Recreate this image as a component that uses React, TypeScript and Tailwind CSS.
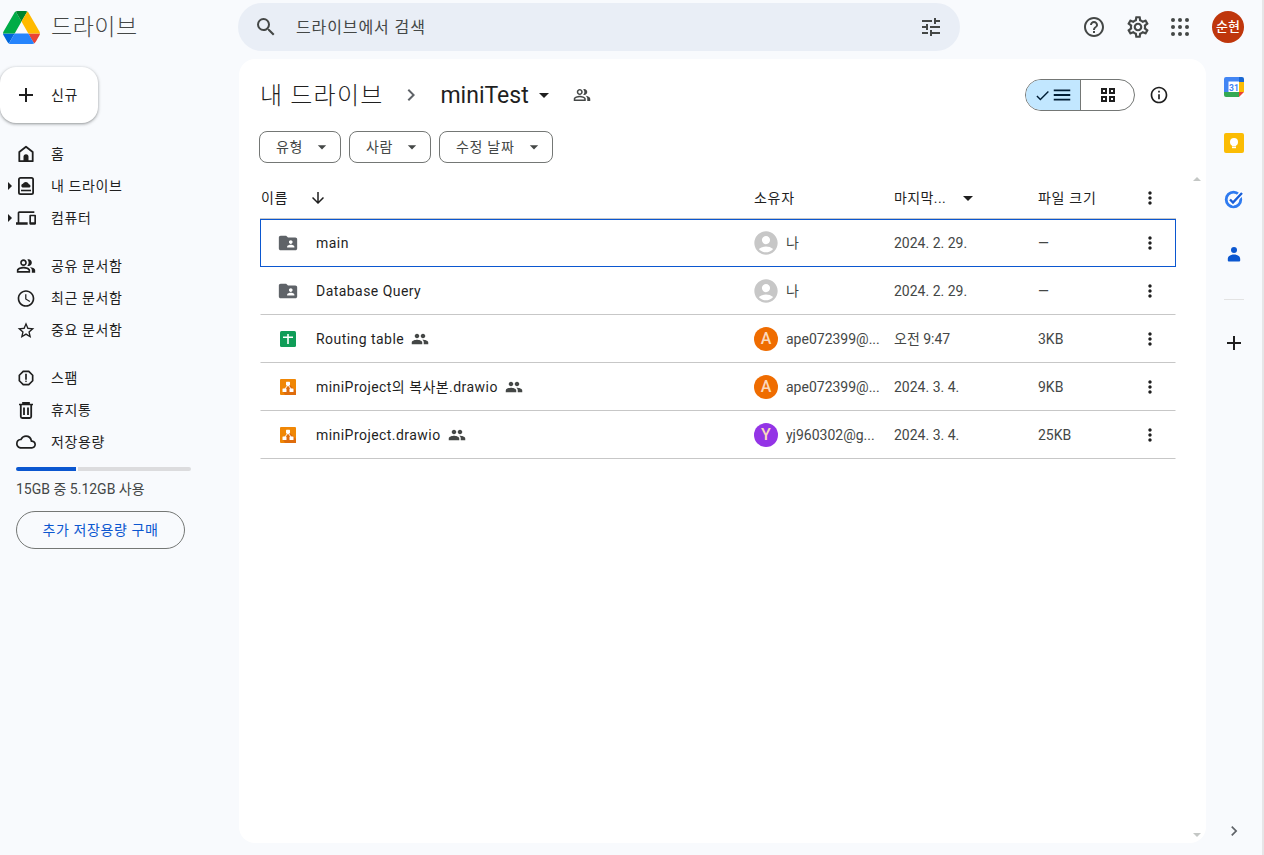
import React from 'react';
import {
  MdAdd,
  MdArrowDownward,
  MdArrowDropDown,
  MdCheck,
  MdChevronRight,
  MdDevices,
  MdFolderShared,
  MdHelpOutline,
  MdMenu,
  MdMoreVert,
  MdOutlineAccessTime,
  MdOutlineCloud,
  MdOutlineInfo,
  MdOutlinePeopleAlt,
  MdOutlineReport,
  MdOutlineSettings,
  MdOutlineStarBorder,
  MdPeople,
  MdSearch,
  MdTune,
  MdAccountCircle,
} from 'react-icons/md';

const FONT = 'font-["Roboto","Noto_Sans_CJK_KR",sans-serif]';

const DriveLogo = () => (
  <svg width="37" height="33" viewBox="0 0 87.3 78">
    <path d="m6.6 66.85 3.85 6.65c.8 1.4 1.95 2.5 3.3 3.3l13.75-23.8h-27.5c0 1.55.4 3.1 1.2 4.5z" fill="#0066da" />
    <path d="m43.65 25-13.75-23.8c-1.35.8-2.5 1.9-3.3 3.3l-25.4 44a9.06 9.06 0 0 0 -1.2 4.5h27.5z" fill="#00ac47" />
    <path d="m73.55 76.8c1.35-.8 2.5-1.9 3.3-3.3l1.6-2.75 7.65-13.25c.8-1.4 1.2-2.95 1.2-4.5h-27.502l5.852 11.5z" fill="#ea4335" />
    <path d="m43.65 25 13.75-23.8c-1.35-.8-2.9-1.2-4.5-1.2h-18.5c-1.6 0-3.15.45-4.5 1.2z" fill="#00832d" />
    <path d="m59.8 53h-32.3l-13.75 23.8c1.35.8 2.9 1.2 4.5 1.2h50.8c1.6 0 3.15-.45 4.5-1.2z" fill="#2684fc" />
    <path d="m73.4 26.5-12.7-22c-.8-1.4-1.95-2.5-3.3-3.3l-13.75 23.8 16.15 28h27.45c0-1.55-.4-3.1-1.2-4.5z" fill="#ffba00" />
  </svg>
);

const AppsIcon = () => (
  <svg width="18" height="18" viewBox="0 0 18 18" fill="#444746">
    {[2, 9, 16].map((y) =>
      [2, 9, 16].map((x) => <circle key={`${x}-${y}`} cx={x} cy={y} r="2" />)
    )}
  </svg>
);

const HomeIcon = () => (
  <svg width="20" height="20" viewBox="0 0 20 20">
    <path d="M10 2.800 3.300 8v9.200h13.400V8z" fill="none" stroke="#1f1f1f" strokeWidth="1.800" strokeLinejoin="round" />
    <path d="M7.500 17v-4.200a2.500 2.500 0 0 1 5 0V17z" fill="#1f1f1f" />
  </svg>
);

const MyDriveIcon = () => (
  <svg width="20" height="20" viewBox="0 0 20 20">
    <rect x="2.900" y="1.900" width="14.200" height="16.200" rx="1.600" fill="none" stroke="#1f1f1f" strokeWidth="1.800" />
    <path d="M6.500 11.600a2 2 0 0 1 .4-3.800 3.200 3.200 0 0 1 6 .4 1.800 1.800 0 0 1 .6 3.400z" fill="#1f1f1f" />
    <path d="M5 14.500h10" stroke="#1f1f1f" strokeWidth="1.600" />
  </svg>
);

const TrashIcon = () => (
  <svg width="20" height="20" viewBox="0 0 20 20" fill="none" stroke="#1f1f1f">
    <path d="M3 4.500h14M7 4.500V2.800h6v1.700" strokeWidth="1.700" />
    <path d="M4.800 4.500v12a1.500 1.500 0 0 0 1.500 1.500h7.400a1.500 1.500 0 0 0 1.500-1.500v-12" strokeWidth="1.800" />
    <path d="M8 7.500v7.500M12 7.500v7.500" strokeWidth="1.800" />
  </svg>
);

const GridIcon = () => (
  <svg width="16" height="16" viewBox="0 0 16 16" fill="none" stroke="#1f1f1f" strokeWidth="2">
    <rect x="2" y="2" width="4" height="4" />
    <rect x="10" y="2" width="4" height="4" />
    <rect x="2" y="10" width="4" height="4" />
    <rect x="10" y="10" width="4" height="4" />
  </svg>
);

const SheetsIcon = () => (
  <svg width="16" height="16" viewBox="0 0 16 16">
    <rect width="16" height="16" rx="1.500" fill="#0f9d58" />
    <path d="M3 5.500h4.200V3h1.600v2.500H13V7H8.800v6H7.200V7H3z" fill="#fff" />
  </svg>
);

const DrawioIcon = () => (
  <svg width="16" height="16" viewBox="0 0 16 16">
    <rect width="16" height="16" rx="1" fill="#f08705" />
    <path d="M16 16H5L3 13l5-6 2-1 6 6z" fill="#df6c0c" />
    <path d="M8 6 4.500 10.500M8 6l3.500 4.500" stroke="#fff" strokeWidth="1" />
    <rect x="6" y="2.800" width="4" height="3.600" rx=".5" fill="#fff" />
    <rect x="2.500" y="9.500" width="4" height="3.600" rx=".5" fill="#fff" />
    <rect x="9.500" y="9.500" width="4" height="3.600" rx=".5" fill="#fff" />
  </svg>
);

const CalendarIcon = () => (
  <svg width="20" height="20" viewBox="0 0 20 20">
    <rect width="20" height="20" rx="2" fill="#fff" />
    <path d="M2 0h13v4.500H4.500V15H0V2a2 2 0 0 1 2-2z" fill="#4285f4" />
    <path d="M15 0h3a2 2 0 0 1 2 2v3h-5z" fill="#1967d2" />
    <path d="M15 5h5v10h-5z" fill="#fbbc04" />
    <path d="M4.500 15H15v5H2a2 2 0 0 1-2-2v-3z" fill="#34a853" />
    <path d="M15 15h5l-5 5z" fill="#ea4335" />
    <text x="10" y="13.500" textAnchor="middle" fontSize="8.500" fontWeight="700" fill="#4285f4" fontFamily="Roboto, sans-serif">31</text>
  </svg>
);

const KeepIcon = () => (
  <svg width="20" height="20" viewBox="0 0 20 20">
    <rect width="20" height="20" rx="2" fill="#fbbc04" />
    <circle cx="10" cy="9" r="4" fill="#fff" />
    <rect x="8" y="11" width="4" height="2.500" fill="#fff" />
    <rect x="8" y="14" width="4" height="1.200" fill="#fff" />
  </svg>
);

const TasksIcon = () => (
  <svg width="20" height="20" viewBox="0 0 20 20">
    <circle cx="9.500" cy="10.500" r="7.300" fill="none" stroke="#2f7bf0" strokeWidth="2.800" />
    <path d="m6 10.500 3 3L18.500 3.500" fill="none" stroke="#fff" strokeWidth="5" />
    <path d="m6 10.500 3 3L18 4" fill="none" stroke="#1a5fd8" strokeWidth="2.400" />
  </svg>
);

const ContactsIcon = () => (
  <svg width="20" height="20" viewBox="0 0 20 20">
    <circle cx="10" cy="5" r="3" fill="#0b57d0" />
    <path d="M3.800 15.500v-1.500C3.800 11 6.800 9.500 10 9.500s6.200 1.500 6.200 4.500v1.500a1 1 0 0 1-1 1H4.800a1 1 0 0 1-1-1z" fill="#0b57d0" />
  </svg>
);

const NavItem = ({
  icon,
  label,
  caret,
}: {
  icon: React.ReactNode;
  label: string;
  caret?: boolean;
}) => (
  <div className="relative flex h-8 items-center pl-[16px]">
    {caret && (
      <span className="absolute left-[8px] h-0 w-0 border-y-[4px] border-l-[4px] border-y-transparent border-l-[#1f1f1f]" />
    )}
    <span className="flex w-[20px] justify-center text-[#1f1f1f]">{icon}</span>
    <span className="ml-[15px] text-[14px] tracking-[0.6px] text-[#1f1f1f]">{label}</span>
  </div>
);

const FilterChip = ({ label, width }: { label: string; width: string }) => (
  <button className={`flex h-8 items-center justify-between rounded-lg border border-[#747775] pl-[16px] pr-[8px] ${width}`}>
    <span className="text-[14px] tracking-[0.7px] text-[#444746]">{label}</span>
    <MdArrowDropDown size={20} className="text-[#444746]" />
  </button>
);

type Row = {
  name: string;
  icon: React.ReactNode;
  shared?: boolean;
  owner: string;
  avatar: string;
  avatarBg?: string;
  date: string;
  size: string;
  selected?: boolean;
};

const rows: Row[] = [
  {
    name: 'main',
    icon: <MdFolderShared size={24} className="text-[#5f6368]" />,
    owner: '나',
    avatar: '',
    date: '2024. 2. 29.',
    size: '—',
    selected: true,
  },
  {
    name: 'Database Query',
    icon: <MdFolderShared size={24} className="text-[#5f6368]" />,
    owner: '나',
    avatar: '',
    date: '2024. 2. 29.',
    size: '—',
  },
  {
    name: 'Routing table',
    icon: <SheetsIcon />,
    shared: true,
    owner: 'ape072399@...',
    avatar: 'A',
    avatarBg: 'bg-[#ef6c00]',
    date: '오전 9:47',
    size: '3KB',
  },
  {
    name: 'miniProject의 복사본.drawio',
    icon: <DrawioIcon />,
    shared: true,
    owner: 'ape072399@...',
    avatar: 'A',
    avatarBg: 'bg-[#ef6c00]',
    date: '2024. 3. 4.',
    size: '9KB',
  },
  {
    name: 'miniProject.drawio',
    icon: <DrawioIcon />,
    shared: true,
    owner: 'yj960302@g...',
    avatar: 'Y',
    avatarBg: 'bg-[#9334e6]',
    date: '2024. 3. 4.',
    size: '25KB',
  },
];

const App = () => {
  return (
    <div className={`flex h-[855px] w-[1264px] overflow-hidden bg-[#f8fafd] ${FONT}`}>
      <div className="flex w-[1262px] shrink-0 flex-col">
        {/* Header */}
        <div className="flex h-[59px] shrink-0 items-start">
          <div className="flex h-[54px] w-[238px] shrink-0 items-center pl-[3px]">
            <DriveLogo />
            <span className="ml-[11px] mt-[2px] text-[23px] font-light tracking-[0.5px] text-[#444746]">드라이브</span>
          </div>
          <div className="mt-[3px] flex h-[48px] w-[722px] items-center rounded-[24px] bg-[#e9eef6] pl-[16px] pr-[17px]">
            <MdSearch size={24} className="text-[#444746]" />
            <span className="ml-[18px] mt-[2px] flex-1 text-[16px] tracking-[0.9px] text-[#444746]">드라이브에서 검색</span>
            <MdTune size={24} className="text-[#444746]" />
          </div>
          <div className="flex h-[54px] flex-1 items-center pl-[122px]">
            <MdHelpOutline size={24} className="text-[#444746]" />
            <MdOutlineSettings size={26} className="ml-[19px] text-[#444746]" />
            <div className="ml-[20px]"><AppsIcon /></div>
            <div className="ml-[23px] flex h-8 w-8 items-center justify-center rounded-full bg-[#bf360c] text-[13px] font-medium text-white">
              순현
            </div>
          </div>
        </div>

        <div className="flex min-h-0 flex-1">
          {/* Sidebar */}
          <div className="w-[239px] shrink-0">
            <button className="mt-[8px] flex h-[56px] w-[98px] items-center rounded-2xl bg-white pl-[14px] shadow-[0_1px_3px_1px_rgba(60,64,67,0.2),0_1px_2px_rgba(60,64,67,0.3)]">
              <MdAdd size={24} className="text-[#1f1f1f]" />
              <span className="ml-[13px] text-[14px] tracking-[0.5px] text-[#1f1f1f]">신규</span>
            </button>
            <div className="mt-[15px]">
              <NavItem icon={<HomeIcon />} label="홈" />
              <NavItem icon={<MyDriveIcon />} label="내 드라이브" caret />
              <NavItem icon={<MdDevices size={22} />} label="컴퓨터" caret />
            </div>
            <div className="mt-[16px]">
              <NavItem icon={<MdOutlinePeopleAlt size={22} />} label="공유 문서함" />
              <NavItem icon={<MdOutlineAccessTime size={21} />} label="최근 문서함" />
              <NavItem icon={<MdOutlineStarBorder size={21} />} label="중요 문서함" />
            </div>
            <div className="mt-[16px]">
              <NavItem icon={<MdOutlineReport size={22} />} label="스팸" />
              <NavItem icon={<TrashIcon />} label="휴지통" />
              <NavItem icon={<MdOutlineCloud size={22} />} label="저장용량" />
            </div>
            <div className="ml-[16px] mt-[9px] w-[175px]">
              <div className="flex h-[4px] gap-[2px]">
                <div className="w-[60px] rounded-l-full bg-[#0b57d0]" />
                <div className="flex-1 rounded-r-full bg-[#dcdcde]" />
              </div>
              <div className="mt-[9px] text-[14px] leading-[18px] text-[#444746]">15GB 중 5.12GB 사용</div>
              <button className="mt-[13px] flex h-[38px] w-[169px] items-center justify-center rounded-full border border-[#747775] text-[14px] tracking-[0.6px] text-[#0b57d0]">
                추가 저장용량 구매
              </button>
            </div>
          </div>

          {/* Main panel */}
          <div className="relative mb-[12px] w-[967px] shrink-0 rounded-2xl bg-white">
            <div className="flex h-[72px] items-center pl-[21px] pr-[37px]">
              <span className="mt-[2px] text-[24px] font-light tracking-[1.2px] text-[#1f1f1f]">내 드라이브</span>
              <MdChevronRight size={24} className="ml-[16px] text-[#5f6368]" />
              <span className="ml-[17px] mt-[3px] text-[23px] text-[#1f1f1f]">miniTest</span>
              <MdArrowDropDown size={24} className="ml-[3px] text-[#1f1f1f]" />
              <MdOutlinePeopleAlt size={18} className="ml-[17px] text-[#444746]" />
              <div className="ml-auto flex h-8 w-[110px] overflow-hidden rounded-full border border-[#747775]">
                <div className="flex w-[55px] items-center justify-center border-r border-[#747775] bg-[#c2e7ff] text-[#001d35]">
                  <MdCheck size={17} />
                  <MdMenu size={22} />
                </div>
                <div className="flex flex-1 items-center justify-center">
                  <GridIcon />
                </div>
              </div>
              <MdOutlineInfo size={20} className="ml-[14px] text-[#1f1f1f]" />
            </div>

            <div className="flex gap-[8px] pl-[20px]">
              <FilterChip label="유형" width="w-[82px]" />
              <FilterChip label="사람" width="w-[82px]" />
              <FilterChip label="수정 날짜" width="w-[114px]" />
            </div>

            {/* File list */}
            <div className="ml-[21px] mt-[15px] w-[916px]">
              <div className="flex h-[41px] items-center border-b border-[#c7c7c7] text-[14px] tracking-[0.7px] text-[#1f1f1f]">
                <div className="flex w-[494px] items-center pl-[1px]">
                  <span>이름</span>
                  <MdArrowDownward size={18} className="ml-[21px]" />
                </div>
                <div className="w-[140px]">소유자</div>
                <div className="flex w-[144px] items-center">
                  <span className="tracking-[0.4px]">마지막...</span>
                  <MdArrowDropDown size={24} className="ml-[10px]" />
                </div>
                <div className="w-[100px]">파일 크기</div>
                <MdMoreVert size={20} className="ml-[2px]" />
              </div>
              {rows.map((row) => (
                <div
                  key={row.name}
                  className={`flex h-[48px] items-center border text-[14px] text-[#444746] ${
                    row.selected ? 'border-[#0b57d0]' : 'border-transparent border-b-[#c7c7c7]'
                  }`}
                >
                  <div className="flex w-[493px] items-center pl-[16px]">
                    <span className="flex w-[22px] justify-center">{row.icon}</span>
                    <span className="ml-[17px] tracking-[0.45px] text-[#1f1f1f]">{row.name}</span>
                    {row.shared && <MdPeople size={18} className="ml-[7px] text-[#444746]" />}
                  </div>
                  <div className="flex w-[140px] items-center">
                    {row.avatar ? (
                      <div className={`flex h-[24px] w-[24px] items-center justify-center rounded-full text-[16px] font-medium text-[#fbd9bd] ${row.avatarBg}`}>
                        {row.avatar}
                      </div>
                    ) : (
                      <MdAccountCircle size={28} className="ml-[-2px] mr-[-2px] text-[#c7c7c7]" />
                    )}
                    <span className="ml-[8px]">{row.owner}</span>
                  </div>
                  <div className="w-[144px]">{row.date}</div>
                  <div className="w-[100px]">{row.size}</div>
                  <MdMoreVert size={20} className="ml-[2px] text-[#1f1f1f]" />
                </div>
              ))}
            </div>

            {/* scroll arrows */}
            <span className="absolute right-[5px] top-[118px] h-0 w-0 border-x-[4px] border-b-[4px] border-x-transparent border-b-[#c4c7c5]" />
            <span className="absolute bottom-[6px] right-[5px] h-0 w-0 border-x-[4px] border-t-[4px] border-x-transparent border-t-[#c4c7c5]" />
          </div>

          {/* Right rail */}
          <div className="flex w-[56px] shrink-0 flex-col items-center pt-[18px]">
            <CalendarIcon />
            <div className="mt-[36px]"><KeepIcon /></div>
            <div className="mt-[36px]"><TasksIcon /></div>
            <div className="mt-[36px]"><ContactsIcon /></div>
            <div className="mt-[34px] h-px w-[20px] bg-[#e3e3e3]" />
            <MdAdd size={24} className="mt-[31px] text-[#1f1f1f]" />
            <MdChevronRight size={20} className="mb-[14px] mt-auto text-[#5f6368]" />
          </div>
        </div>
      </div>
      <div className="w-[2px] bg-[#e6e6e8]" />
    </div>
  );
};

export default App;
